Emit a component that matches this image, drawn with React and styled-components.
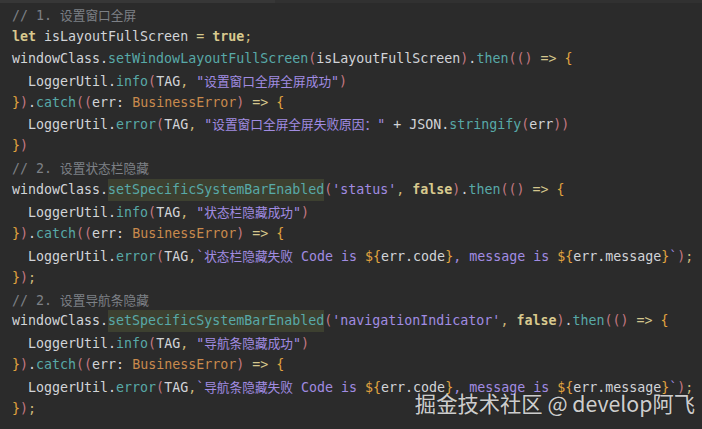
import React from 'react';
import styled, { createGlobalStyle } from 'styled-components';

const GlobalStyle = createGlobalStyle`
  html, body {
    margin: 0;
    padding: 0;
    background: #2b2b2b;
  }
`;

const Screen = styled.div`
  position: relative;
  width: 702px;
  height: 429px;
  overflow: hidden;
  background: #2b2b2b;
  display: flex;
  flex-direction: column;
`;

const TopStrip = styled.div`
  height: 3px;
  display: flex;
  background: #313131;
`;

const TopStripLit = styled.div`
  width: 275px;
  background: #373737;
`;

const Code = styled.div`
  padding: 1px 0 0 12px;
  font-family: "DejaVu Sans Mono", "Liberation Mono", "Noto Sans CJK SC", monospace;
  font-size: 13.3px;
  line-height: 21.9px;
  white-space: pre;
  color: #d2d4d8;
`;

const Line = styled.div`
  height: 21.9px;
`;

const colors = {
  plain: '#d2d4d8',
  comment: '#7d8086',
  kw: '#d8c98e',
  op: '#d4c68c',
  punc: '#cdb97a',
  fn: '#58a9a8',
  str: '#a18ce2',
  paren: '#c47882',
  brace: '#e1a43f',
  type: '#c98a4d',
};

const Token = styled.span`
  color: ${p => colors[p.$k] || colors.plain};
  font-weight: ${p => (p.$k === 'kw' ? 700 : 400)};
  background: ${p => (p.$hl ? '#3d4030' : 'transparent')};
  display: ${p => (p.$hl ? 'inline-block' : 'inline')};
`;

const Han = styled.span`
  font-family: "Noto Sans CJK SC", sans-serif;
  font-size: 12.7px;
`;

const Watermark = styled.div`
  position: absolute;
  right: 7px;
  bottom: 14px;
  font-family: "Noto Sans CJK SC", "Noto Sans", sans-serif;
  font-size: 21.3px;
  line-height: 25px;
  color: rgba(255, 255, 255, 0.8);
  text-shadow: 0 0 1px rgba(0, 0, 0, 0.4);
  white-space: pre;
`;

// split off CJK runs so they get the narrower fallback size
const withHan = text =>
  text.split(/([\u3000-\u9fff\uff00-\uffef]+)/).map((part, i) =>
    /[\u3000-\u9fff\uff00-\uffef]/.test(part) ? <Han key={i}>{part}</Han> : part
  );

const catchLine = [
  ['brace', '}'], ['paren', ')'], ['plain', '.'], ['fn', 'catch'], ['paren', '(('],
  ['plain', 'err: '], ['type', 'BusinessError'], ['paren', ')'], ['plain', ' '],
  ['op', '=>'], ['plain', ' '], ['brace', '{'],
];

const infoLine = msg => [
  ['plain', '  LoggerUtil.'], ['fn', 'info'], ['paren', '('], ['plain', 'TAG'],
  ['punc', ','], ['plain', ' '], ['str', `"${msg}"`], ['paren', ')'],
];

const templateErrorLine = msg => [
  ['plain', '  LoggerUtil.'], ['fn', 'error'], ['paren', '('], ['plain', 'TAG'],
  ['punc', ','], ['str', '`' + msg + ' Code is '], ['brace', '${'], ['plain', 'err.code'],
  ['brace', '}'], ['str', ', message is '], ['brace', '${'], ['plain', 'err.message'],
  ['brace', '}'], ['str', '`'], ['paren', ')'], ['punc', ';'],
];

const barEnabledLine = name => [
  ['plain', 'windowClass.'], ['fn', 'setSpecificSystemBarEnabled', true], ['paren', '('],
  ['str', `'${name}'`], ['punc', ','], ['plain', ' '], ['kw', 'false'], ['paren', ')'],
  ['plain', '.'], ['fn', 'then'], ['paren', '(()'], ['plain', ' '], ['op', '=>'],
  ['plain', ' '], ['brace', '{'],
];

const lines = [
  [['comment', '// 1. 设置窗口全屏']],
  [['kw', 'let'], ['plain', ' isLayoutFullScreen '], ['op', '='], ['plain', ' '], ['kw', 'true'], ['punc', ';']],
  [
    ['plain', 'windowClass.'], ['fn', 'setWindowLayoutFullScreen'], ['paren', '('],
    ['plain', 'isLayoutFullScreen'], ['paren', ')'], ['plain', '.'], ['fn', 'then'],
    ['paren', '(()'], ['plain', ' '], ['op', '=>'], ['plain', ' '], ['brace', '{'],
  ],
  infoLine('设置窗口全屏全屏成功'),
  catchLine,
  [
    ['plain', '  LoggerUtil.'], ['fn', 'error'], ['paren', '('], ['plain', 'TAG'], ['punc', ','],
    ['plain', ' '], ['str', '"设置窗口全屏全屏失败原因："'], ['plain', ' + JSON.'], ['fn', 'stringify'],
    ['paren', '('], ['plain', 'err'], ['paren', '))'],
  ],
  [['brace', '}'], ['paren', ')']],
  [['comment', '// 2. 设置状态栏隐藏']],
  barEnabledLine('status'),
  infoLine('状态栏隐藏成功'),
  catchLine,
  templateErrorLine('状态栏隐藏失败'),
  [['brace', '}'], ['paren', ')'], ['punc', ';']],
  [['comment', '// 2. 设置导航条隐藏']],
  barEnabledLine('navigationIndicator'),
  infoLine('导航条隐藏成功'),
  catchLine,
  templateErrorLine('导航条隐藏失败'),
  [['brace', '}'], ['paren', ')'], ['punc', ';']],
];

export default function App() {
  return (
    <>
      <GlobalStyle />
      <Screen>
        <TopStrip>
          <TopStripLit />
        </TopStrip>
        <Code>
          {lines.map((tokens, i) => (
            <Line key={i}>
              {tokens.map(([k, text, hl], j) => (
                <Token key={j} $k={k} $hl={hl}>
                  {withHan(text)}
                </Token>
              ))}
            </Line>
          ))}
        </Code>
        <Watermark>掘金技术社区 @ develop阿飞</Watermark>
      </Screen>
    </>
  );
}
